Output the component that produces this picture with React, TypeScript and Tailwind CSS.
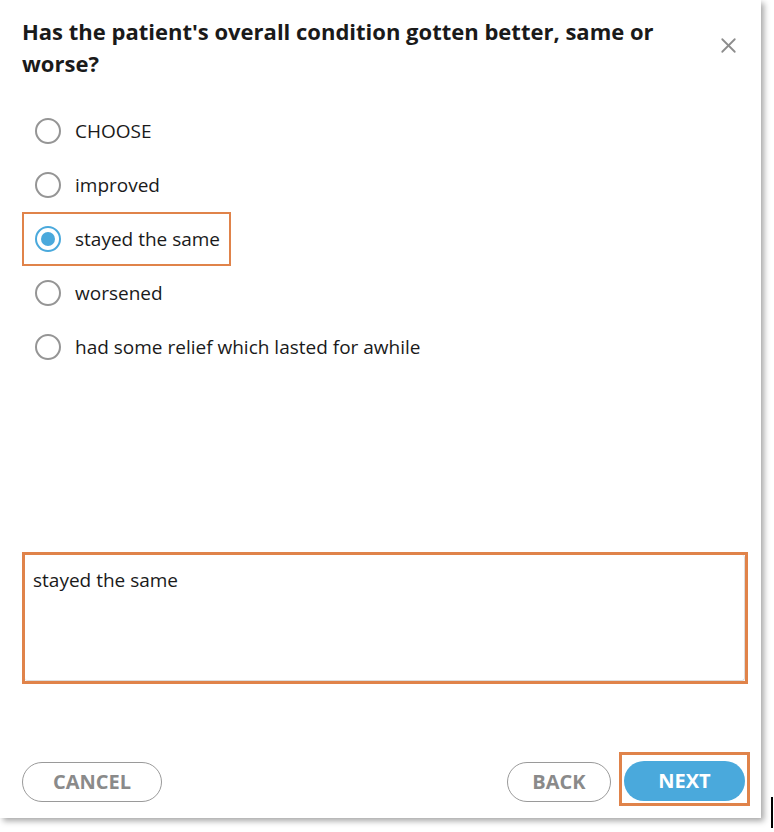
import { X } from 'lucide-react';

const OPTIONS = [
  'CHOOSE',
  'improved',
  'stayed the same',
  'worsened',
  'had some relief which lasted for awhile',
];

const SELECTED = 'stayed the same';

function Radio({ checked }: { checked: boolean }) {
  return checked ? (
    <span className="flex h-[26px] w-[26px] items-center justify-center rounded-full border-2 border-[#4aa9dc] bg-white">
      <span className="h-[14px] w-[14px] rounded-full bg-[#4aa9dc]" />
    </span>
  ) : (
    <span className="h-[26px] w-[26px] rounded-full border-2 border-[#959595] bg-white" />
  );
}

export default function App() {
  return (
    <div className="relative h-[832px] w-[774px] bg-white font-['Open_Sans',sans-serif] text-[#1a1a1a]">
      <div className="flex h-[818px] w-[761px] flex-col bg-white shadow-[3px_3px_6px_rgba(0,0,0,0.35)]">
        {/* Header */}
        <div className="flex items-start justify-between pl-[22px] pr-[22px] pt-[15px]">
          <h1 className="w-[640px] text-[22px] font-bold leading-[32px]">
            Has the patient's overall condition gotten better, same or worse?
          </h1>
          <button className="mt-[18px] mr-[-2px] text-[#8c8c8c]">
            <X className="h-[25px] w-[25px]" strokeWidth={1.7} />
          </button>
        </div>

        {/* Options */}
        <div className="mt-[25px] flex flex-col pl-[22px]">
          {OPTIONS.map((opt) => {
            const checked = opt === SELECTED;
            return (
              <label
                key={opt}
                className={
                  checked
                    ? 'flex h-[54px] w-[209px] items-center gap-[14px] border-2 border-[#e0834a] pl-[11px] text-[19px]'
                    : 'flex h-[54px] w-fit items-center gap-[14px] border-2 border-transparent pl-[11px] text-[19px]'
                }
              >
                <Radio checked={checked} />
                <span className="pr-2">{opt}</span>
              </label>
            );
          })}
        </div>

        {/* Free text */}
        <div className="mt-[178px] ml-[22px] mr-[13px] h-[132px] border-[3px] border-[#e0834a] bg-white">
          <div className="h-full w-full rounded-[3px] border-r border-b border-[#dddddd] px-[8px] pt-[11px] text-[19px]">
            stayed the same
          </div>
        </div>

        {/* Footer */}
        <div className="mt-[68px] flex items-center justify-between pl-[22px] pr-[11px]">
          <button className="mt-[6px] h-[40px] w-[140px] rounded-full border border-[#9a9a9a] text-[20px] font-bold text-[#8a8a8a]">
            CANCEL
          </button>
          <div className="flex items-center gap-[8px]">
            <button className="mt-[6px] h-[40px] w-[104px] rounded-full border border-[#9a9a9a] text-[20px] font-bold text-[#8a8a8a]">
              BACK
            </button>
            <div className="border-[3px] border-[#e0834a] p-[6px_2px_2px_2px]">
              <button className="block h-[40px] w-[121px] rounded-full bg-[#4aa9dc] text-[20px] font-bold text-white">
                NEXT
              </button>
            </div>
          </div>
        </div>
      </div>
      <span className="absolute left-[771px] top-[797px] h-[31px] w-[2px] bg-black" />
    </div>
  );
}
